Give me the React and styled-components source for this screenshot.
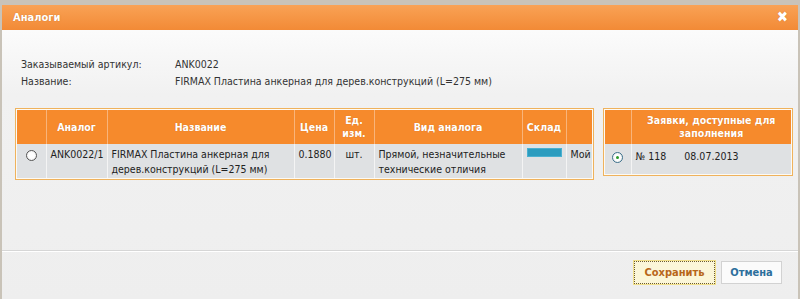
import React from 'react';
import styled, {createGlobalStyle} from 'styled-components';

const GlobalStyle = createGlobalStyle`
   html, body {
      margin: 0;
      padding: 0;
      background: #c9c3b8;
      font-family: 'DejaVu Sans Condensed', 'DejaVu Sans', sans-serif;
      font-size: 10.5px;
      color: #222;
   }
`;

const Dialog = styled.div`
   margin: 5px 2px 0 2px;
   height: 294px;
   display: flex;
   flex-direction: column;
   background: linear-gradient(#ffffff 0px, #f1f1f1 90px, #eeeeee 100%);
   overflow: hidden;
`;

const TitleBar = styled.div`
   height: 25px;
   flex: none;
   display: flex;
   align-items: center;
   justify-content: space-between;
   padding: 0 10px 0 11px;
   background: linear-gradient(#f9a255, #f28a36);
   color: #fff;
   font-weight: bold;
   font-size: 11px;
   text-shadow: 0 0 1px rgba(150, 70, 0, 0.5);
`;

const Close = styled.span`
   font-size: 15px;
   font-weight: bold;
   line-height: 1;
`;

const Body = styled.div`
   flex: 1;
   padding: 27px 5px 0 13px;
`;

const Info = styled.div`
   display: grid;
   grid-template-columns: 154px 1fr;
   row-gap: 3px;
   padding-left: 6px;
   line-height: 14px;
   color: #333;
`;

const Tables = styled.div`
   display: flex;
   align-items: flex-start;
   justify-content: space-between;
   margin-top: 20px;
`;

const Frame = styled.div`
   border: 1px solid #efb25c;
   padding: 1px;
   background: #fdfaf4;
   width: ${p => p.w}px;
   box-sizing: border-box;
`;

const Table = styled.table`
   border-collapse: collapse;
   width: 100%;
   table-layout: fixed;
`;

const Th = styled.th`
   background: #f68a2c;
   color: #fff;
   font-weight: bold;
   font-size: 10.5px;
   height: 34px;
   padding: 0 3px;
   text-align: center;
   vertical-align: middle;
   line-height: 13px;
   border-left: 1px solid #f9b47a;
   text-shadow: 0 0 1px rgba(160, 70, 0, 0.45);
   &:first-child { border-left: none; }
`;

const Td = styled.td`
   background: #dfe1e3;
   padding: ${p => p.pt ?? 3}px 4px 0 4px;
   height: ${p => p.h || 31}px;
   vertical-align: top;
   text-align: ${p => p.center ? 'center' : 'left'};
   line-height: 15px;
   border-left: 1px solid #f4f4f4;
   color: #222;
   white-space: ${p => p.nowrap ? 'nowrap' : 'normal'};
   &:first-child { border-left: none; }
`;

const Radio = styled.span`
   display: inline-block;
   width: 9px;
   height: 9px;
   margin-top: 3px;
   border-radius: 50%;
   border: 1px solid #555;
   background: radial-gradient(circle, #fff 40%, #e4e4e4 100%);
   position: relative;
   ${p => p.checked && `
      border-color: #3b6f8a;
      &::after {
         content: '';
         position: absolute;
         left: 3px;
         top: 3px;
         width: 3px;
         height: 3px;
         border-radius: 50%;
         background: #2a9a2a;
      }
   `}
`;

const Stock = styled.div`
   height: 7px;
   margin-top: 1px;
   background: #2b9cbf;
   border: 1px solid #4ab0d0;
`;

const Footer = styled.div`
   flex: none;
   box-sizing: border-box;
   border-top: 1px solid #d6d6d6;
   box-shadow: inset 0 1px 0 #ffffff;
   height: 49px;
   display: flex;
   justify-content: flex-end;
   align-items: flex-start;
   gap: 6px;
   padding: 10px 16px 0 0;
`;

const Button = styled.button`
   height: 23px;
   font-family: inherit;
   font-size: 11px;
   font-weight: bold;
   cursor: pointer;
   ${p => p.primary ? `
      width: 81px;
      background: #fbf6d8;
      color: #b8661a;
      border: 1px dotted #6a5a30;
      box-shadow: 0 0 0 1px #f2e08a;
   ` : `
      width: 61px;
      background: #fbfbfb;
      color: #2d6f9c;
      border: 1px solid #d2d2d2;
   `}
`;

const App = () => {
   return (
      <>
         <GlobalStyle/>
         <Dialog>
            <TitleBar>
               <span>Аналоги</span>
               <Close>✖</Close>
            </TitleBar>
            <Body>
               <Info>
                  <span>Заказываемый артикул:</span>
                  <span>ANK0022</span>
                  <span>Название:</span>
                  <span>FIRMAX Пластина анкерная для дерев.конструкций (L=275 мм)</span>
               </Info>
               <Tables>
                  <Frame w={579}>
                     <Table>
                        <colgroup>
                           <col style={{width: 29}}/>
                           <col style={{width: 61}}/>
                           <col style={{width: 187}}/>
                           <col style={{width: 40}}/>
                           <col style={{width: 40}}/>
                           <col style={{width: 148}}/>
                           <col style={{width: 44}}/>
                           <col/>
                        </colgroup>
                        <thead>
                           <tr>
                              <Th></Th>
                              <Th>Аналог</Th>
                              <Th>Название</Th>
                              <Th>Цена</Th>
                              <Th>Ед.<br/>изм.</Th>
                              <Th>Вид аналога</Th>
                              <Th>Склад</Th>
                              <Th></Th>
                           </tr>
                        </thead>
                        <tbody>
                           <tr>
                              <Td center><Radio/></Td>
                              <Td nowrap>ANK0022/1</Td>
                              <Td>FIRMAX Пластина анкерная для дерев.конструкций (L=275 мм)</Td>
                              <Td>0.1880</Td>
                              <Td center>шт.</Td>
                              <Td>Прямой, незначительные технические отличия</Td>
                              <Td><Stock/></Td>
                              <Td>Мой</Td>
                           </tr>
                        </tbody>
                     </Table>
                  </Frame>
                  <Frame w={190}>
                     <Table>
                        <colgroup>
                           <col style={{width: 26}}/>
                           <col/>
                        </colgroup>
                        <thead>
                           <tr>
                              <Th></Th>
                              <Th>Заявки, доступные для заполнения</Th>
                           </tr>
                        </thead>
                        <tbody>
                           <tr>
                              <Td center pt={5} h={25}><Radio checked/></Td>
                              <Td pt={5} h={25} nowrap>№ 118&nbsp;&nbsp;&nbsp;&nbsp;&nbsp;&nbsp;08.07.2013</Td>
                           </tr>
                        </tbody>
                     </Table>
                  </Frame>
               </Tables>
            </Body>
            <Footer>
               <Button primary>Сохранить</Button>
               <Button>Отмена</Button>
            </Footer>
         </Dialog>
      </>
   )
}

export default App;
